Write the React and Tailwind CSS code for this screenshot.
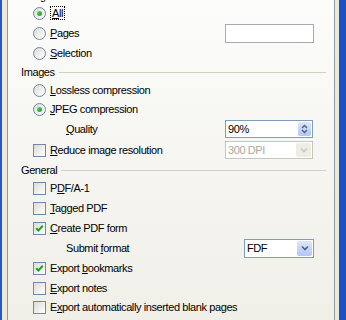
import React from "react";

const U = ({ children }) => <span className="underline underline-offset-[1px]">{children}</span>;

function Radio({ checked }) {
  return (
    <span className="relative inline-flex h-[13px] w-[13px] shrink-0 items-center justify-center rounded-full border border-[#6f8aa6] bg-gradient-to-br from-[#dcdcd5] to-[#ffffff]">
      {checked && (
        <span className="h-[5px] w-[5px] rounded-full bg-gradient-to-br from-[#5fd35f] to-[#1c9a1c]" />
      )}
    </span>
  );
}

function Check({ checked }) {
  return (
    <span className="relative inline-flex h-[13px] w-[13px] shrink-0 items-center justify-center border border-[#6f8aa6] bg-gradient-to-br from-[#dcdcd5] to-[#ffffff]">
      {checked && (
        <svg width="9" height="9" viewBox="0 0 9 9">
          <path d="M1.2 4.2 L3.4 6.5 L7.8 1.8" fill="none" stroke="#22a222" strokeWidth="2" />
        </svg>
      )}
    </span>
  );
}

function Row({ h, children, control }) {
  return (
    <div className={`flex items-center ${h}`}>
      <div className="flex items-center gap-[4px] pl-[25px]">{children}</div>
      {control && <div className="ml-auto mr-[20px] flex">{control}</div>}
    </div>
  );
}

function Header({ h, text }) {
  return (
    <div className={`flex items-center ${h} pl-[13px] pr-[8px]`}>
      <span>{text}</span>
      <span className="ml-[4px] h-px flex-1 bg-[#d0d0bf]" />
    </div>
  );
}

function Chevron({ color }) {
  return (
    <svg width="8" height="6" viewBox="0 0 8 6">
      <path d="M1 1.5 L4 4.5 L7 1.5" fill="none" stroke={color} strokeWidth="1.6" />
    </svg>
  );
}

export default function App() {
  return (
    <div
      className="flex h-[320px] w-[346px] overflow-hidden text-[11px] tracking-[-0.4px] text-black"
      style={{ fontFamily: '"Liberation Sans", Arial, sans-serif' }}
    >
      <div className="w-[2px] bg-[#2a56c6]" />
      <div className="w-[5px] bg-[#ece9d8]" />
      <div className="flex w-[328px] flex-col border-x border-[#919b9c] bg-gradient-to-b from-[#fcfcfb] to-[#f0efe8]">
        <div className="-mt-[11px] flex h-[14px] items-center pl-[13px] pr-[8px]">
          <span>Range</span>
          <span className="ml-[4px] h-px flex-1 bg-[#d0d0bf]" />
        </div>
        <Row h="h-[20px]">
          <Radio checked />
          <span className="border border-dotted border-black px-px leading-[12px]"><U>A</U>ll</span>
        </Row>
        <Row
          h="h-[20px]"
          control={<div className="h-[19px] w-[89px] border border-[#a5acb2] bg-white" />}
        >
          <Radio />
          <span><U>P</U>ages</span>
        </Row>
        <Row h="h-[20px]">
          <Radio />
          <span><U>S</U>election</span>
        </Row>
        <Header h="h-[18px]" text="Images" />
        <Row h="h-[18px]">
          <Radio />
          <span><U>L</U>ossless compression</span>
        </Row>
        <Row h="h-[20px]">
          <Radio checked />
          <span><U>J</U>PEG compression</span>
        </Row>
        <div className="flex h-[20px] items-center">
          <span className="pl-[58px]"><U>Q</U>uality</span>
          <div className="ml-auto mr-[21px] flex h-[18px] w-[88px] items-center border border-[#7f9db9] bg-white pl-[2px]">
            <span>90%</span>
            <div className="ml-auto mr-px flex h-[14px] w-[13px] flex-col items-center justify-center rounded-[2px] bg-gradient-to-b from-[#dde6fb] to-[#b3c6f2]">
              <svg width="7" height="10" viewBox="0 0 7 10">
                <path d="M1 4 L3.5 1.5 L6 4 M1 6 L3.5 8.5 L6 6" fill="none" stroke="#4d6185" strokeWidth="1.4" />
              </svg>
            </div>
          </div>
        </div>
        <div className="flex h-[22px] items-center">
          <div className="flex items-center gap-[4px] pl-[25px]">
            <Check />
            <span><U>R</U>educe image resolution</span>
          </div>
          <div className="ml-auto mr-[21px] flex h-[18px] w-[88px] items-center border border-[#c9c7ba] bg-white pl-[2px] text-[#aca899]">
            <span>300 DPI</span>
            <div className="ml-auto mr-px flex h-[14px] w-[15px] items-center justify-center rounded-[2px] bg-[#eeede5]">
              <Chevron color="#c9c7ba" />
            </div>
          </div>
        </div>
        <Header h="h-[18px]" text="General" />
        <Row h="h-[18px]">
          <Check />
          <span>P<U>D</U>F/A-1</span>
        </Row>
        <Row h="h-[22px]">
          <Check />
          <span><U>T</U>agged PDF</span>
        </Row>
        <Row h="h-[18px]">
          <Check checked />
          <span><U>C</U>reate PDF form</span>
        </Row>
        <div className="flex h-[22px] items-center">
          <span className="pl-[58px]">Submit <U>f</U>ormat</span>
          <div className="ml-auto mr-[20px] flex h-[19px] w-[70px] items-center border border-[#7f9db9] bg-white pl-[2px]">
            <span>FDF</span>
            <div className="ml-auto mr-px flex h-[15px] w-[15px] items-center justify-center rounded-[2px] bg-gradient-to-b from-[#dde6fb] to-[#b3c6f2]">
              <Chevron color="#4d6185" />
            </div>
          </div>
        </div>
        <Row h="h-[18px]">
          <Check checked />
          <span>Export <U>b</U>ookmarks</span>
        </Row>
        <Row h="h-[22px]">
          <Check />
          <span><U>E</U>xport notes</span>
        </Row>
        <Row h="h-[16px]">
          <Check />
          <span>E<U>x</U>port automatically inserted blank pages</span>
        </Row>
      </div>
      <div className="w-[4px] bg-[#ece9d8]" />
      <div className="w-[7px] bg-[#1d4fc8]" />
    </div>
  );
}
